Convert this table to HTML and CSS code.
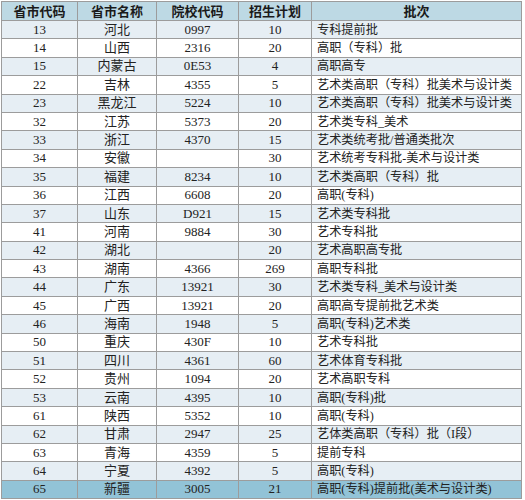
FILE: index.html
```html
<!DOCTYPE html>
<html lang="zh-CN">
<head>
<meta charset="utf-8">
<title>院校代码</title>
<link rel="stylesheet" href="styles.css">
</head>
<body>
<table class="grid">
  <colgroup>
    <col class="c1"><col class="c2"><col class="c3"><col class="c4"><col class="c5">
  </colgroup>
  <thead>
    <tr class="head"><th>省市代码</th><th>省市名称</th><th>院校代码</th><th>招生计划</th><th>批次</th></tr>
  </thead>
  <tbody>
    <tr><td>13</td><td>河北</td><td>0997</td><td>10</td><td class="b">专科提前批</td></tr>
    <tr><td>14</td><td>山西</td><td>2316</td><td>20</td><td class="b">高职（专科）批</td></tr>
    <tr><td>15</td><td>内蒙古</td><td>0E53</td><td>4</td><td class="b">高职高专</td></tr>
    <tr><td>22</td><td>吉林</td><td>4355</td><td>5</td><td class="b">艺术类高职（专科）批美术与设计类</td></tr>
    <tr><td>23</td><td>黑龙江</td><td>5224</td><td>10</td><td class="b">艺术类高职（专科）批美术与设计类</td></tr>
    <tr><td>32</td><td>江苏</td><td>5373</td><td>20</td><td class="b">艺术类专科_美术</td></tr>
    <tr><td>33</td><td>浙江</td><td>4370</td><td>15</td><td class="b">艺术类统考批/普通类批次</td></tr>
    <tr><td>34</td><td>安徽</td><td></td><td>30</td><td class="b">艺术统考专科批-美术与设计类</td></tr>
    <tr><td>35</td><td>福建</td><td>8234</td><td>10</td><td class="b">艺术类高职（专科）批</td></tr>
    <tr><td>36</td><td>江西</td><td>6608</td><td>20</td><td class="b">高职(专科)</td></tr>
    <tr><td>37</td><td>山东</td><td>D921</td><td>15</td><td class="b">艺术类专科批</td></tr>
    <tr><td>41</td><td>河南</td><td>9884</td><td>30</td><td class="b">艺术专科批</td></tr>
    <tr><td>42</td><td>湖北</td><td></td><td>20</td><td class="b">艺术高职高专批</td></tr>
    <tr><td>43</td><td>湖南</td><td>4366</td><td>269</td><td class="b">高职专科批</td></tr>
    <tr><td>44</td><td>广东</td><td>13921</td><td>30</td><td class="b">艺术类专科_美术与设计类</td></tr>
    <tr><td>45</td><td>广西</td><td>13921</td><td>20</td><td class="b">高职高专提前批艺术类</td></tr>
    <tr><td>46</td><td>海南</td><td>1948</td><td>5</td><td class="b">高职(专科)艺术类</td></tr>
    <tr><td>50</td><td>重庆</td><td>430F</td><td>10</td><td class="b">艺术专科批</td></tr>
    <tr><td>51</td><td>四川</td><td>4361</td><td>60</td><td class="b">艺术体育专科批</td></tr>
    <tr><td>52</td><td>贵州</td><td>1094</td><td>20</td><td class="b">艺术高职专科</td></tr>
    <tr><td>53</td><td>云南</td><td>4395</td><td>10</td><td class="b">高职(专科)批</td></tr>
    <tr><td>61</td><td>陕西</td><td>5352</td><td>10</td><td class="b">高职(专科)</td></tr>
    <tr><td>62</td><td>甘肃</td><td>2947</td><td>25</td><td class="b">艺体类高职（专科）批（I段）</td></tr>
    <tr><td>63</td><td>青海</td><td>4359</td><td>5</td><td class="b">提前专科</td></tr>
    <tr><td>64</td><td>宁夏</td><td>4392</td><td>5</td><td class="b">高职(专科)</td></tr>
    <tr class="last"><td>65</td><td>新疆</td><td>3005</td><td>21</td><td class="b">高职(专科)提前批(美术与设计类)</td></tr>
  </tbody>
</table>
</body>
</html>
```
FILE: styles.css
```css
html, body {
  margin: 0;
  padding: 0;
  background: #ffffff;
}
body {
  padding: 1px 0 0 1px;
  font-family: "Liberation Serif", "Noto Sans CJK SC", serif;
  color: #222222;
}
.grid {
  border-collapse: collapse;
  table-layout: fixed;
  width: 520px;
  font-size: 13px;
}
.c1 { width: 76px; }
.c2 { width: 79px; }
.c3 { width: 82px; }
.c4 { width: 73px; }
.c5 { width: 210px; }
.grid tr {
  height: 18.4px;
}
.grid tr.head {
  height: 19px;
}
.grid th, .grid td {
  border: 1px solid #9c9c9c;
  padding: 0;
  text-align: center;
  vertical-align: middle;
  white-space: nowrap;
  overflow: hidden;
  line-height: 10px;
}
.grid th {
  background: #bdd9e4;
  font-family: "Noto Sans CJK SC", "Liberation Sans", sans-serif;
  font-weight: bold;
  font-size: 13px;
  color: #1a1a1a;
}
.grid tbody tr:nth-child(odd) td {
  background: #e6eef4;
}
.grid tbody tr.last td {
  background: #92c3d7;
}
.grid td.b {
  text-align: left;
  padding-left: 5px;
  font-size: 12.2px;
}
```
